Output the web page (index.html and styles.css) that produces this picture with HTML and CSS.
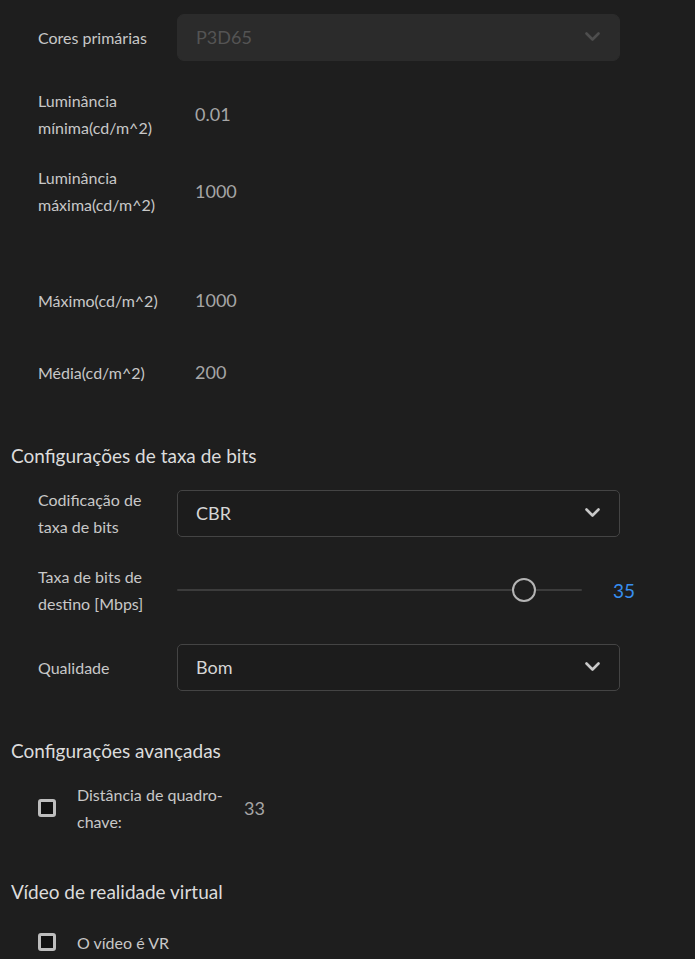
FILE: index.html
```html
<!DOCTYPE html>
<html lang="pt">
<head>
<meta charset="utf-8">
<title>Configurações</title>
<link rel="stylesheet" href="styles.css">
</head>
<body>
<main class="panel">
  <section class="group">
    <div class="row">
      <span class="label">Cores primárias</span>
      <div class="select select-disabled">
        <span class="select-text">P3D65</span>
        <svg class="chevron" width="15" height="10" viewBox="0 0 15 10"><polyline points="1.5,1.5 7.5,7.5 13.5,1.5" fill="none" stroke="currentColor" stroke-width="2.6" stroke-linecap="round" stroke-linejoin="round"/></svg>
      </div>
    </div>
    <div class="row">
      <span class="label">Luminância mínima(cd/m^2)</span>
      <span class="value">0.01</span>
    </div>
    <div class="row">
      <span class="label">Luminância máxima(cd/m^2)</span>
      <span class="value">1000</span>
    </div>
    <div class="row row-after-blank">
      <span class="label">Máximo(cd/m^2)</span>
      <span class="value">1000</span>
    </div>
    <div class="row row-tight">
      <span class="label">Média(cd/m^2)</span>
      <span class="value">200</span>
    </div>
  </section>

  <section class="group">
    <h2 class="group-title">Configurações de taxa de bits</h2>
    <div class="row">
      <span class="label">Codificação de taxa de bits</span>
      <div class="select">
        <span class="select-text">CBR</span>
        <svg class="chevron" width="15" height="10" viewBox="0 0 15 10"><polyline points="1.5,1.5 7.5,7.5 13.5,1.5" fill="none" stroke="currentColor" stroke-width="2.6" stroke-linecap="round" stroke-linejoin="round"/></svg>
      </div>
    </div>
    <div class="row">
      <span class="label">Taxa de bits de destino [Mbps]</span>
      <div class="slider">
        <div class="slider-track" style="--pos: 85.7%">
          <span class="slider-thumb"></span>
        </div>
        <span class="slider-value">35</span>
      </div>
    </div>
    <div class="row">
      <span class="label">Qualidade</span>
      <div class="select">
        <span class="select-text">Bom</span>
        <svg class="chevron" width="15" height="10" viewBox="0 0 15 10"><polyline points="1.5,1.5 7.5,7.5 13.5,1.5" fill="none" stroke="currentColor" stroke-width="2.6" stroke-linecap="round" stroke-linejoin="round"/></svg>
      </div>
    </div>
  </section>

  <section class="group">
    <h2 class="group-title">Configurações avançadas</h2>
    <div class="check-row">
      <span class="checkbox"></span>
      <span class="check-label">Distância de quadro-chave:</span>
      <span class="check-value">33</span>
    </div>
  </section>

  <section class="group">
    <h2 class="group-title">Vídeo de realidade virtual</h2>
    <div class="check-row check-row-single">
      <span class="checkbox"></span>
      <span class="check-label">O vídeo é VR</span>
    </div>
  </section>
</main>
</body>
</html>
```

FILE: styles.css
```css
html, body {
  margin: 0;
  padding: 0;
  background: #1e1e1e;
}

body {
  font-family: "Lato", "Open Sans", sans-serif;
  color: #c8c8c8;
  overflow: hidden;
}

.panel {
  padding: 10px 0 0 11px;
  display: flex;
  flex-direction: column;
  gap: 44px;
}

.group {
  display: flex;
  flex-direction: column;
  gap: 23px;
}

.group-title {
  margin: 0 0 -6px 0;
  height: 26px;
  line-height: 26px;
  font-size: 19px;
  font-weight: 400;
  color: #dcdcdc;
}

.row {
  display: grid;
  grid-template-columns: 139px 443px;
  align-items: center;
  min-height: 54px;
  padding-left: 27px;
}

.row-after-blank {
  margin-top: 32px;
}

.row-tight {
  margin-top: -5px;
}

.label {
  font-size: 16px;
  line-height: 27px;
  color: #c8c8c8;
  padding-right: 10px;
}

.value {
  padding-left: 18px;
  font-size: 18px;
  color: #a6a6a6;
}

.select {
  height: 47px;
  box-sizing: border-box;
  border: 1px solid #444;
  border-radius: 5px;
  background: #1c1c1c;
  display: flex;
  align-items: center;
  justify-content: space-between;
  padding: 0 19px 0 18px;
  color: #c8c8c8;
}

.select-text {
  font-size: 18px;
  color: #d6d6d6;
}

.select-disabled {
  background: #2b2b2b;
  border-color: #2b2b2b;
  border-radius: 7px;
  color: #4e4e4e;
}

.select-disabled .select-text {
  color: #545454;
}

.chevron {
  display: block;
}

.slider {
  display: flex;
  align-items: center;
}

.slider-track {
  flex: none;
  position: relative;
  width: 405px;
  height: 2px;
  background: #3c3c3c;
  border-radius: 1px;
}

.slider-thumb {
  position: absolute;
  left: calc(var(--pos) - 12px);
  top: -11px;
  width: 24px;
  height: 24px;
  box-sizing: border-box;
  border: 2px solid #b4b4b4;
  border-radius: 50%;
  background: #1e1e1e;
}

.slider-value {
  flex: none;
  margin-left: 31px;
  font-size: 19px;
  color: #378ef0;
}

.check-row {
  display: flex;
  align-items: center;
  min-height: 54px;
  padding-left: 27px;
}

.check-row-single {
  margin-top: -7px;
}

.checkbox {
  flex: none;
  width: 18px;
  height: 18px;
  box-sizing: border-box;
  border: 3px solid #bdbdbd;
  border-radius: 3px;
  background: #111;
}

.check-label {
  width: 156px;
  margin-left: 21px;
  font-size: 16px;
  line-height: 27px;
  color: #c8c8c8;
}

.check-value {
  margin-left: 11px;
  font-size: 18px;
  color: #a6a6a6;
}
```
